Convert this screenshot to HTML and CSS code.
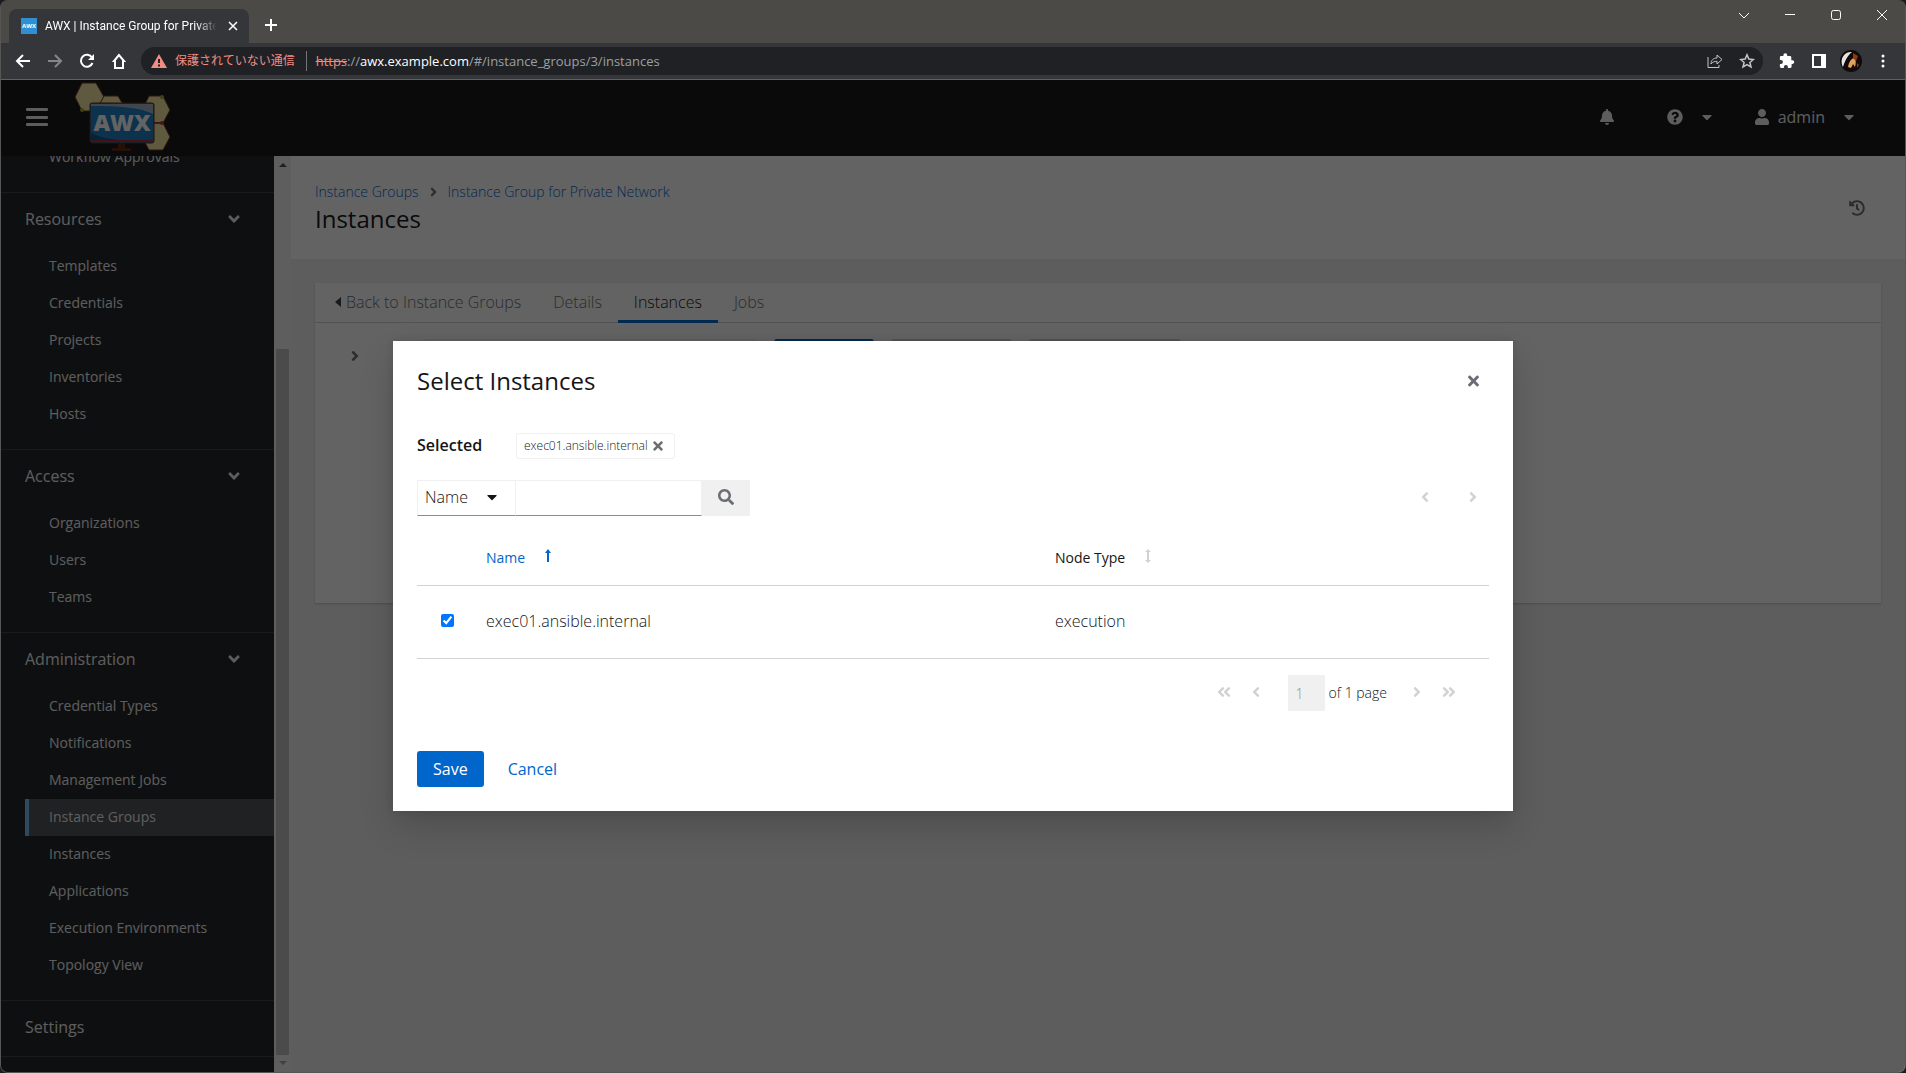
FILE: index.html
```html
<!DOCTYPE html>
<html lang="en">
<head>
<meta charset="utf-8">
<title>AWX | Instance Group for Private Network</title>
<link rel="stylesheet" href="styles.css">
</head>
<body>
<svg class="sprite" aria-hidden="true">
  <symbol id="angle" viewBox="0 0 256 512"><path d="M224.3 273l-136 136c-9.4 9.4-24.6 9.4-33.9 0l-22.6-22.6c-9.4-9.4-9.4-24.6 0-33.9l96.4-96.4-96.4-96.4c-9.4-9.4-9.4-24.6 0-33.9L54.3 103c9.4-9.4 24.6-9.4 33.9 0l136 136c9.5 9.4 9.5 24.6.1 34z"/></symbol>
  <symbol id="angle-left" viewBox="0 0 256 512"><use href="#angle" width="256" height="512" transform="rotate(180 128 256)"/></symbol>
  <symbol id="angle-down" viewBox="0 0 512 512"><use href="#angle" x="128" width="256" height="512" transform="rotate(90 256 256)"/></symbol>
  <symbol id="angles" viewBox="0 0 448 512"><use href="#angle" width="256" height="512"/><use href="#angle" x="192" width="256" height="512"/></symbol>
  <symbol id="angles-left" viewBox="0 0 448 512"><use href="#angles" width="448" height="512" transform="rotate(180 224 256)"/></symbol>
  <symbol id="caret" viewBox="0 0 320 512"><path d="M31.3 192h257.3c17.8 0 26.7 21.5 14.1 34.1L174.1 354.8c-7.8 7.8-20.5 7.8-28.3 0L17.2 226.1C4.6 213.5 13.5 192 31.3 192z"/></symbol>
  <symbol id="times" viewBox="0 0 352 512"><path d="M242.72 256l100.07-100.07c12.28-12.28 12.28-32.19 0-44.48l-22.24-22.24c-12.28-12.28-32.19-12.28-44.48 0L176 189.28 75.93 89.21c-12.28-12.28-32.19-12.28-44.48 0L9.21 111.45c-12.28 12.28-12.28 32.19 0 44.48L109.28 256 9.21 356.07c-12.28 12.28-12.28 32.19 0 44.48l22.24 22.24c12.28 12.28 32.2 12.28 44.48 0L176 322.72l100.07 100.07c12.28 12.28 32.2 12.28 44.48 0l22.24-22.24c12.28-12.28 12.28-32.19 0-44.48L242.72 256z"/></symbol>
</svg>

<div class="browser">
  <div class="tabstrip">
    <div class="tab">
      <span class="favicon">AWX</span>
      <span class="tab-title">AWX | Instance Group for Private</span>
      <button class="chrome-btn" aria-label="Close tab"><svg width="10" height="10" viewBox="0 0 10 10"><path class="line bold" d="M1 1l8 8M9 1l-8 8"/></svg></button>
    </div>
    <button class="chrome-btn new-tab" aria-label="New tab"><svg width="12" height="12" viewBox="0 0 12 12"><path class="line thick" d="M6 0v12M0 6h12"/></svg></button>
    <div class="window-controls">
      <button class="chrome-btn" aria-label="Search tabs"><svg width="12" height="12" viewBox="0 0 12 12"><path class="line" d="M1 4l5 5 5-5"/></svg></button>
      <button class="chrome-btn" aria-label="Minimize"><svg width="12" height="12" viewBox="0 0 12 12"><path class="line" d="M1 5.5h10"/></svg></button>
      <button class="chrome-btn" aria-label="Maximize"><svg width="12" height="12" viewBox="0 0 12 12"><rect class="line" x="1.5" y="1.5" width="9" height="9" rx="2"/></svg></button>
      <button class="chrome-btn" aria-label="Close"><svg width="12" height="12" viewBox="0 0 12 12"><path class="line" d="M1 1l10 10M11 1L1 11"/></svg></button>
    </div>
  </div>
  <div class="toolbar">
    <button class="chrome-btn" aria-label="Back"><svg width="16" height="16" viewBox="0 0 16 16"><path class="line thick" d="M15 8H2M8 2L2 8l6 6"/></svg></button>
    <button class="chrome-btn dim" aria-label="Forward"><svg width="16" height="16" viewBox="0 0 16 16"><path class="line thick" d="M1 8h13M8 2l6 6-6 6"/></svg></button>
    <button class="chrome-btn" aria-label="Reload"><svg width="16" height="16" viewBox="0 0 16 16"><path class="line thick" d="M13.5 10A6 6 0 1 1 13 4.5"/><path fill="currentColor" d="M15 1v6H9z"/></svg></button>
    <button class="chrome-btn" aria-label="Home"><svg width="16" height="18" viewBox="0 0 16 18"><path class="line thick" d="M8 3L3 9h1v7h8V9h1z"/></svg></button>
    <div class="omnibox">
      <svg width="16" height="16" viewBox="0 0 16 16"><path fill="#f28b82" d="M8 1l8 14H0z"/><path stroke="#202124" stroke-width="2" d="M8 6v4M8 11.500v2"/></svg>
      <span class="insecure" lang="ja">保護されていない通信</span>
      <span class="omni-sep"></span>
      <span class="url"><s>https</s>://<b>awx.example.com</b>/#/instance_groups/3/instances</span>
      <span class="omni-actions">
        <button class="chrome-btn soft" aria-label="Share"><svg width="16" height="16" viewBox="0 0 16 16"><path class="line" d="M1 4v10.500h11V12"/><path class="line" d="M4 11c0-4 2.500-6 6-6V2l5 4.500-5 4.500V8.300C7.500 8.300 5.500 9 4 11z"/></svg></button>
        <button class="chrome-btn soft" aria-label="Bookmark"><svg width="16" height="16" viewBox="0 0 16 16"><path class="line bold" d="M8 1.800l1.800 4.300 4.600.4-3.500 3 1.100 4.500L8 11.600 4 14l1.100-4.500-3.500-3 4.600-.4z"/></svg></button>
      </span>
    </div>
    <button class="chrome-btn" aria-label="Extensions"><svg width="16" height="16" viewBox="0 0 16 16"><path fill="currentColor" d="M13.300 7.300h-1V4.400c0-.8-.6-1.400-1.400-1.400H8.200V2.100a1.900 1.900 0 0 0-3.800 0V3H2C1.200 3 .9 3.600.9 4.400V7h1a2 2 0 0 1 0 4h-1v2.600c0 .8.600 1.400 1.400 1.400h2.600v-1a2 2 0 0 1 4 0v1h2.300c.8 0 1.400-.6 1.400-1.400v-2.700h.9a1.800 1.800 0 0 0 0-3.600z"/></svg></button>
    <button class="chrome-btn" aria-label="Side panel"><svg width="14" height="14" viewBox="0 0 14 14"><path fill="currentColor" fill-rule="evenodd" d="M0 0h14v14H0zM2 2v10h7V2z"/></svg></button>
    <button class="chrome-btn" aria-label="Profile"><svg width="22" height="22" viewBox="0 0 22 22"><circle cx="11" cy="11" r="11" fill="#120a08"/><path fill="#e4e4e4" d="M3 17C-1 10 4 1 12 2 7 6 5 11 3 17z"/><path fill="#e0a35c" d="M8 17c1-5 3-9 7-9 1 2 1 5 0 9l-2-3-2 4z"/><path fill="#8c3a12" d="M13 3l5 3-2 5-3-3zM17 13l2 2-2 3z"/></svg></button>
    <button class="chrome-btn" aria-label="Menu"><svg width="4" height="14" viewBox="0 0 4 14" fill="currentColor"><circle cx="2" cy="2" r="1.500"/><circle cx="2" cy="7" r="1.500"/><circle cx="2" cy="12" r="1.500"/></svg></button>
  </div>
</div>

<div class="app">
  <header class="masthead">
    <button class="icon-btn" aria-label="Global navigation"><svg width="22" height="20" viewBox="0 0 22 20" fill="currentColor"><rect x="0" y="1" width="22" height="3" rx="1"/><rect x="0" y="9" width="22" height="3" rx="1"/><rect x="0" y="16" width="22" height="3" rx="1"/></svg></button>
    <a class="logo" href="#home" aria-label="AWX home">
      <svg width="98" height="70" viewBox="0 0 98 70">
        <g fill="#f5e6a0" stroke="#6b3020"><path d="M8 1h14l8 14-8 14H8L1 15z"/><path d="M30 14h14l6 10-6 16H30l-6-15z"/><path d="M75 14h14l7 14-7 13H75l-7-13z"/><path d="M75 41h14l7 14-7 13H75l-7-13z"/></g>
        <path stroke="#6b3020" d="M79 41h9"/>
        <circle cx="8" cy="28" r="2" fill="#8fae2c"/><circle cx="88" cy="15" r="2" fill="#8fae2c"/><circle cx="88" cy="41" r="2" fill="#c4282c"/>
        <path fill="#5a2613" d="M44 61h7v5h6v3H38v-3h6z"/>
        <rect x="16" y="21" width="64" height="40" rx="2" fill="#1c7fc4" stroke="#5a2613"/>
        <path fill="#9fb6c6" d="M17 22h62v10c-14-7-34-8-62-8z"/>
        <path fill="#075a92" d="M17 50c10 8 34 9 62 9H17z"/>
        <path fill="#b3282d" d="M17 58h62v2H17z"/>
        <text x="48" y="49" text-anchor="middle" class="logo-text">AWX</text>
      </svg>
    </a>
    <div class="head-tools">
      <button class="icon-btn" aria-label="Notifications"><svg width="14" height="16" viewBox="0 0 448 512" fill="currentColor"><path d="M224 512c35.320 0 63.970-28.650 63.970-64H160.030c0 35.350 28.650 64 63.970 64zm215.390-149.710c-19.320-20.760-55.470-51.990-55.470-154.290 0-77.700-54.480-139.900-127.940-155.160V32c0-17.670-14.320-32-31.980-32s-31.980 14.330-31.980 32v20.840C118.560 68.100 64.080 130.300 64.080 208c0 102.300-36.150 133.530-55.470 154.290-6 6.450-8.660 14.160-8.610 21.710.11 16.400 12.980 32 32.100 32h383.800c19.120 0 32-15.600 32.100-32 .05-7.550-2.610-15.270-8.610-21.710z"/></svg></button>
      <button class="icon-btn" aria-label="Info"><svg width="16" height="16" viewBox="0 0 512 512" fill="currentColor"><path d="M504 256c0 136.997-111.043 248-248 248S8 392.997 8 256C8 119.083 119.043 8 256 8s248 111.083 248 248zM262.655 90c-54.497 0-89.255 22.957-116.549 63.758-3.536 5.286-2.353 12.415 2.715 16.258l34.699 26.310c5.205 3.947 12.621 3.008 16.665-2.122 17.864-22.658 30.113-35.797 57.303-35.797 20.429 0 45.698 13.148 45.698 32.958 0 14.976-12.363 22.667-32.534 33.976C247.128 238.528 216 254.941 216 296v4c0 6.627 5.373 12 12 12h56c6.627 0 12-5.373 12-12v-1.333c0-28.462 83.186-29.647 83.186-106.667 0-58.002-60.165-102-116.531-102zM256 338c-25.365 0-46 20.635-46 46 0 25.364 20.635 46 46 46s46-20.636 46-46c0-25.365-20.635-46-46-46z"/></svg><svg class="caret" width="10" height="16"><use href="#caret"/></svg></button>
      <button class="icon-btn" aria-label="User"><svg width="14" height="16" viewBox="0 0 448 512" fill="currentColor"><path d="M224 256c70.700 0 128-57.300 128-128S294.700 0 224 0 96 57.300 96 128s57.300 128 128 128zm89.600 32h-16.700c-22.200 10.200-46.900 16-72.900 16s-50.600-5.800-72.900-16h-16.700C60.200 288 0 348.200 0 422.400V464c0 26.500 21.500 48 48 48h352c26.500 0 48-21.500 48-48v-41.600c0-74.200-60.200-134.400-134.400-134.400z"/></svg><span class="user-name">admin</span><svg class="caret" width="10" height="16"><use href="#caret"/></svg></button>
    </div>
  </header>

  <div class="body">
    <nav class="sidebar">
      <div class="nav-section"><a class="nav-item" href="#wa">Workflow Approvals</a></div>
      <div class="nav-section">
        <button class="nav-head">Resources<svg width="18" height="18"><use href="#angle-down"/></svg></button>
        <a class="nav-item" href="#templates">Templates</a><a class="nav-item" href="#credentials">Credentials</a><a class="nav-item" href="#projects">Projects</a><a class="nav-item" href="#inventories">Inventories</a><a class="nav-item" href="#hosts">Hosts</a>
      </div>
      <div class="nav-section">
        <button class="nav-head">Access<svg width="18" height="18"><use href="#angle-down"/></svg></button>
        <a class="nav-item" href="#organizations">Organizations</a><a class="nav-item" href="#users">Users</a><a class="nav-item" href="#teams">Teams</a>
      </div>
      <div class="nav-section">
        <button class="nav-head">Administration<svg width="18" height="18"><use href="#angle-down"/></svg></button>
        <a class="nav-item" href="#types">Credential Types</a><a class="nav-item" href="#notifications">Notifications</a><a class="nav-item" href="#jobs">Management Jobs</a><a class="nav-item current" href="#groups">Instance Groups</a><a class="nav-item" href="#instances">Instances</a><a class="nav-item" href="#applications">Applications</a><a class="nav-item" href="#ee">Execution Environments</a><a class="nav-item" href="#topology">Topology View</a>
      </div>
      <div class="nav-section single"><a class="nav-head" href="#settings">Settings</a></div>
    </nav>
    <div class="scrollbar" aria-hidden="true">
      <svg width="8" height="17" viewBox="0 0 8 17"><path fill="#505050" d="M0 11h8L4 7z"/></svg>
      <div class="track"><div class="thumb"></div></div>
      <svg width="8" height="17" viewBox="0 0 8 17"><path fill="#a3a3a3" d="M0 6h8l-4 4z"/></svg>
    </div>
    <main class="content">
      <section class="page-head">
        <div>
          <div class="crumbs"><a href="#groups">Instance Groups</a><svg width="7" height="14"><use href="#angle"/></svg><a href="#group">Instance Group for Private Network</a></div>
          <h1 class="title">Instances</h1>
        </div>
        <button class="icon-btn history" aria-label="View activity stream"><svg width="16" height="16" viewBox="0 0 512 512" fill="currentColor"><path d="M504 255.531c.253 136.640-111.180 248.372-247.820 248.468-59.015.042-113.223-20.530-155.822-54.911-11.077-8.940-11.905-25.541-1.839-35.607l11.267-11.267c8.609-8.609 22.353-9.551 31.891-1.984C173.062 425.135 212.781 440 256 440c101.705 0 184-82.311 184-184 0-101.705-82.311-184-184-184-48.814 0-93.149 18.969-126.068 49.932l50.754 50.754c10.080 10.080 2.941 27.314-11.313 27.314H24c-8.837 0-16-7.163-16-16V38.627c0-14.254 17.234-21.393 27.314-11.314l49.372 49.372C129.209 34.136 189.552 8 256 8c136.810 0 247.747 110.780 248 247.531zm-180.912 78.784l9.823-12.630c8.138-10.463 6.253-25.542-4.210-33.679L288 256.349V152c0-13.255-10.745-24-24-24h-16c-13.255 0-24 10.745-24 24v135.651l65.409 50.874c10.463 8.137 25.541 6.253 33.679-4.210z"/></svg></button>
      </section>
      <section class="card">
        <div class="tabs">
          <a class="tab-link" href="#back"><svg width="6" height="12" viewBox="0 0 6 12"><path fill="#3c3f42" d="M6 1v10L0 6z"/></svg>Back to Instance Groups</a>
          <a class="tab-link" href="#details">Details</a>
          <a class="tab-link active" href="#instances">Instances</a>
          <a class="tab-link" href="#jobs">Jobs</a>
        </div>
        <div class="card-tools">
          <button class="icon-btn expand" aria-label="Expand"><svg width="8" height="16"><use href="#angle"/></svg></button>
          <span class="ghost filter"></span><span class="ghost primary"></span><span class="ghost second"></span><span class="ghost third"></span>
        </div>
      </section>
    </main>
  </div>

  <div class="backdrop">
    <div class="modal" role="dialog" aria-labelledby="modal-title">
      <div class="modal-head"><h2 class="title" id="modal-title">Select Instances</h2><button class="icon-btn close" aria-label="Close"><svg width="11" height="16"><use href="#times"/></svg></button></div>
      <div class="selected"><strong>Selected</strong><span class="chip">exec01.ansible.internal<button class="icon-btn" aria-label="Remove"><svg width="10" height="14"><use href="#times"/></svg></button></span></div>
      <div class="filter-row">
        <button class="key-select">Name<svg width="10" height="16"><use href="#caret"/></svg></button><input class="search" type="text" aria-label="Search text input"><button class="search-btn" aria-label="Search"><svg width="16" height="16" viewBox="0 0 512 512" fill="currentColor"><path d="M505 442.700L405.300 343c-4.500-4.500-10.600-7-17-7H372c27.600-35.300 44-79.700 44-128C416 93.100 322.900 0 208 0S0 93.100 0 208s93.100 208 208 208c48.300 0 92.700-16.400 128-44v16.300c0 6.400 2.500 12.500 7 17l99.700 99.700c9.400 9.400 24.600 9.400 33.900 0l28.300-28.300c9.400-9.400 9.400-24.600.1-34zM208 336c-70.700 0-128-57.200-128-128 0-70.700 57.200-128 128-128 70.700 0 128 57.200 128 128 0 70.700-57.200 128-128 128z"/></svg></button>
        <div class="mini-pager"><button class="page-btn" aria-label="Previous" disabled><svg width="8" height="16"><use href="#angle-left"/></svg></button><button class="page-btn" aria-label="Next" disabled><svg width="8" height="16"><use href="#angle"/></svg></button></div>
      </div>
      <table class="grid">
        <thead><tr><td class="pick"></td><th class="name sorted">Name<svg width="6" height="14" viewBox="0 0 6 14"><path fill="currentColor" d="M3 0l3 4H4v9H2V4H0z"/></svg></th><th>Node Type<svg width="6" height="14" viewBox="0 0 6 14"><path fill="#d2d2d2" d="M3 0l3 3H4v8h2l-3 3-3-3h2V3H0z"/></svg></th></tr></thead>
        <tbody><tr><td class="pick"><input type="checkbox" aria-label="Select exec01.ansible.internal" checked></td><td>exec01.ansible.internal</td><td>execution</td></tr></tbody>
      </table>
      <div class="pager">
        <button class="page-btn" aria-label="First page" disabled><svg width="14" height="16"><use href="#angles-left"/></svg></button>
        <button class="page-btn" aria-label="Previous page" disabled><svg width="8" height="16"><use href="#angle-left"/></svg></button>
        <label class="page-label"><input class="page-input" type="text" value="1" aria-label="Current page" disabled>of 1 page</label>
        <button class="page-btn" aria-label="Next page" disabled><svg width="8" height="16"><use href="#angle"/></svg></button>
        <button class="page-btn" aria-label="Last page" disabled><svg width="14" height="16"><use href="#angles"/></svg></button>
      </div>
      <div class="actions"><button class="btn save">Save</button><button class="btn cancel">Cancel</button></div>
    </div>
  </div>
</div>
</body>
</html>
```
FILE: styles.css
```css
* { box-sizing: border-box; }
body {
  margin: 0;
  height: 100vh;
  display: flex;
  flex-direction: column;
  overflow: hidden;
  background: #4b4a47;
  border: solid #565654;
  border-width: 0 1px 1px;
  border-radius: 8px;
  font: 300 16px/24px "Open Sans", "Liberation Sans", sans-serif;
  color: #151515;
}
html { background: #1c1c1e; }
button, input { font: inherit; color: inherit; margin: 0; }
button { background: none; border: 0; padding: 0; }
a { text-decoration: none; color: #06c; }
svg { display: block; flex: none; fill: currentColor; }
.sprite { position: absolute; width: 0; height: 0; }

/* Browser window */
.browser { flex: none; font: 400 13px/20px "Open Sans", "Noto Sans CJK JP", sans-serif; color: #fff; }
.chrome-btn { display: flex; align-items: center; justify-content: center; width: 32px; height: 32px; flex: none; color: #fff; }
.chrome-btn.dim { color: #85868a; }
.chrome-btn.soft { color: #c4c5c8; }
.line { fill: none; stroke: currentColor; stroke-width: 1; }
.line.bold { stroke-width: 1.5; }
.line.thick { stroke-width: 2; }
.tabstrip { display: flex; height: 43px; padding: 9px 0 0 8px; }
.tab { display: flex; align-items: center; width: 240px; padding-left: 12px; background: #35363a; border-radius: 8px 8px 0 0; }
.favicon { width: 16px; height: 16px; background: #2f8fd0; font: 700 6px/16px "Open Sans", sans-serif; text-align: center; }
.tab-title { flex: 1; margin-left: 8px; overflow: hidden; white-space: nowrap; font-family: Roboto, sans-serif; font-size: 12px; mask-image: linear-gradient(90deg, #000 88%, transparent); }
.new-tab { margin-left: 6px; }
.window-controls { display: flex; margin-left: auto; margin-top: -10px; }
.window-controls .chrome-btn { width: 46px; }
.toolbar { display: flex; align-items: center; height: 37px; padding: 0 6px; background: #35363a; border-bottom: 1px solid #5f6063; }
.omnibox { flex: 1; display: flex; align-items: center; height: 28px; margin: 0 8px 0 6px; padding-left: 10px; background: #202124; border-radius: 14px; }
.insecure { margin-left: 8px; font-size: 12px; color: #f28b82; }
.omni-sep { width: 1px; height: 20px; margin: 0 9px 0 11px; background: #74757a; }
.url { color: #9aa0a6; }
.url b { font-weight: 400; color: #fff; }
.url s { color: #f28b82; }
.omni-actions { display: flex; margin-left: auto; }

/* Application shell */
.app { position: relative; flex: 1; min-height: 0; display: flex; flex-direction: column; overflow: hidden; }
.icon-btn { display: flex; align-items: center; }
.masthead { flex: none; display: flex; align-items: center; height: 76px; padding: 0 51px 2px 25px; background: #151515; color: #f0f0f0; }
.logo { margin-left: 26px; }
.logo-text { font: 800 23px "Open Sans", sans-serif; fill: #fff; }
.head-tools { display: flex; gap: 53px; margin-left: auto; }
.head-tools .caret { margin-left: 19px; }
.head-tools .icon-btn:last-child { margin-left: -10px; }
.user-name { margin-left: 9px; font-weight: 400; }
.body { flex: 1; min-height: 0; display: flex; }

.sidebar { width: 273px; flex: none; display: flex; flex-direction: column; justify-content: flex-end; overflow: hidden; padding-bottom: 15px; background: #212427; font-weight: 400; }
.nav-section { flex: none; padding-bottom: 16px; border-bottom: 1px solid #3c3f42; }
.nav-section.single { padding-bottom: 0; }
.nav-head { display: flex; align-items: center; justify-content: space-between; width: 100%; height: 55px; padding: 0 31px 3px 24px; color: #f0f0f0; }
.nav-item { display: block; margin-left: 24px; padding: 7px 0 9px 24px; font-size: 14px; line-height: 21px; color: #f0f0f0; }
.nav-item.current { padding-left: 20px; background: #4f5255; border-left: 4px solid #73bcf7; }

.scrollbar { width: 17px; flex: none; display: flex; flex-direction: column; align-items: center; background: #f1f1f1; }
.track { flex: 1; width: 13px; display: flex; flex-direction: column; justify-content: flex-end; }
.thumb { height: 80%; background: #c1c1c1; }

.content { flex: 1; background: #f0f0f0; }
.page-head { display: flex; justify-content: space-between; align-items: center; padding: 24px 40px 24px 24px; background: #fff; }
.crumbs { display: flex; align-items: center; gap: 11px; font-size: 14px; line-height: 23px; }
.crumbs svg { color: #6a6e73; }
.title { margin: 0; font-size: 24px; font-weight: 400; line-height: 32px; }
.history { color: #6a6e73; }
.card { margin: 24px; height: 320px; background: #fff; box-shadow: 0 1px 2px rgba(3,3,3,.2); }
.tabs { display: flex; padding-left: 4px; height: 40px; border-bottom: 1px solid #d2d2d2; }
.tab-link { display: flex; align-items: center; gap: 5px; height: 40px; padding: 0 16px 2px; color: #6a6e73; }
.tab-link.active { color: #151515; border-bottom: 3px solid #06c; padding-top: 1px; padding-bottom: 0; }
.card-tools { display: flex; padding: 16px 24px; }
.expand { width: 85px; padding: 0 0 2px 12px; height: 36px; color: #6a6e73; }
.ghost { height: 36px; border-radius: 3px; }
.ghost.filter { width: 333px; border: 1px solid #f0f0f0; }
.ghost.primary { width: 100px; margin-left: 17px; background: #06c; }
.ghost.second { width: 121px; margin-left: 17px; background: #d2d2d2; }
.ghost.third { width: 152px; margin-left: 17px; background: #d2d2d2; }

/* Dialog */
.backdrop { position: absolute; inset: 0; display: flex; align-items: center; justify-content: center; background: rgba(3,3,3,.62); }
.modal { width: 100%; max-width: 1120px; padding: 24px; background: #fff; box-shadow: 0 16px 32px rgba(3,3,3,.16), 0 0 8px rgba(3,3,3,.1); }
.modal-head { display: flex; justify-content: space-between; align-items: center; height: 32px; padding-right: 10px; }
.close { color: #6a6e73; }
.selected { display: flex; align-items: center; justify-content: flex-start; gap: 32px; margin-top: 36px; height: 26px; }
.selected strong { width: 67px; font-weight: 600; padding-bottom: 2px; }
.chip { display: flex; align-items: center; gap: 5px; height: 26px; padding: 0 11px 0 7px; border: 1px solid #f0f0f0; border-radius: 3px; font-size: 12px; line-height: 18px; color: #151515; }
.chip .icon-btn { color: #6a6e73; }
.filter-row { display: flex; height: 36px; margin-top: 21px; }
.key-select { display: flex; align-items: center; justify-content: space-between; width: 99px; padding: 0 18px 2px 7px; border: 1px solid #f0f0f0; border-bottom-color: #8a8d90; }
.search { width: 186px; border: 1px solid #f0f0f0; border-left: 0; border-bottom-color: #8a8d90; background: #fff; }
.search-btn { width: 48px; padding: 9px 16px 11px; background: #f0f0f0; color: #6a6e73; }
.mini-pager { display: flex; margin-left: auto; }
.page-btn { display: flex; align-items: center; justify-content: center; width: 32px; height: 34px; padding-bottom: 2px; color: #d2d2d2; }
.mini-pager .page-btn { width: 48px; margin-right: -8px; margin-left: 8px; height: 36px; }
.grid { width: 100%; margin-top: 16px; border-collapse: collapse; table-layout: fixed; }
.grid tr { border-bottom: 1px solid #d2d2d2; }
.grid td, .grid th { height: 73px; padding: 0 16px 2px; text-align: left; }
.grid thead td, .grid thead th { height: 54px; font-size: 14px; font-weight: 500; }
.grid th svg { display: inline-block; margin-left: 20px; }
.grid .pick { width: 53px; padding: 0 0 4px 24px; }
.grid .name { width: 569px; }
.grid .sorted { color: #06c; }
.grid input { display: block; width: 13px; height: 13px; }
.pager { display: flex; align-items: center; justify-content: flex-end; height: 36px; margin: 16px 24px 0 0; font-size: 14px; }
.page-label { display: flex; align-items: center; gap: 4px; margin: 0 14px 0 16px; }
.page-input { width: 37px; height: 36px; padding: 0 8px; border: 0; background: #f0f0f0; color: #8a8d90; }
.actions { display: flex; gap: 8px; margin-top: 40px; }
.btn { height: 36px; padding: 0 16px 1px; border-radius: 3px; font-weight: 400; color: #06c; }
.save { background: #06c; color: #fff; }
```
